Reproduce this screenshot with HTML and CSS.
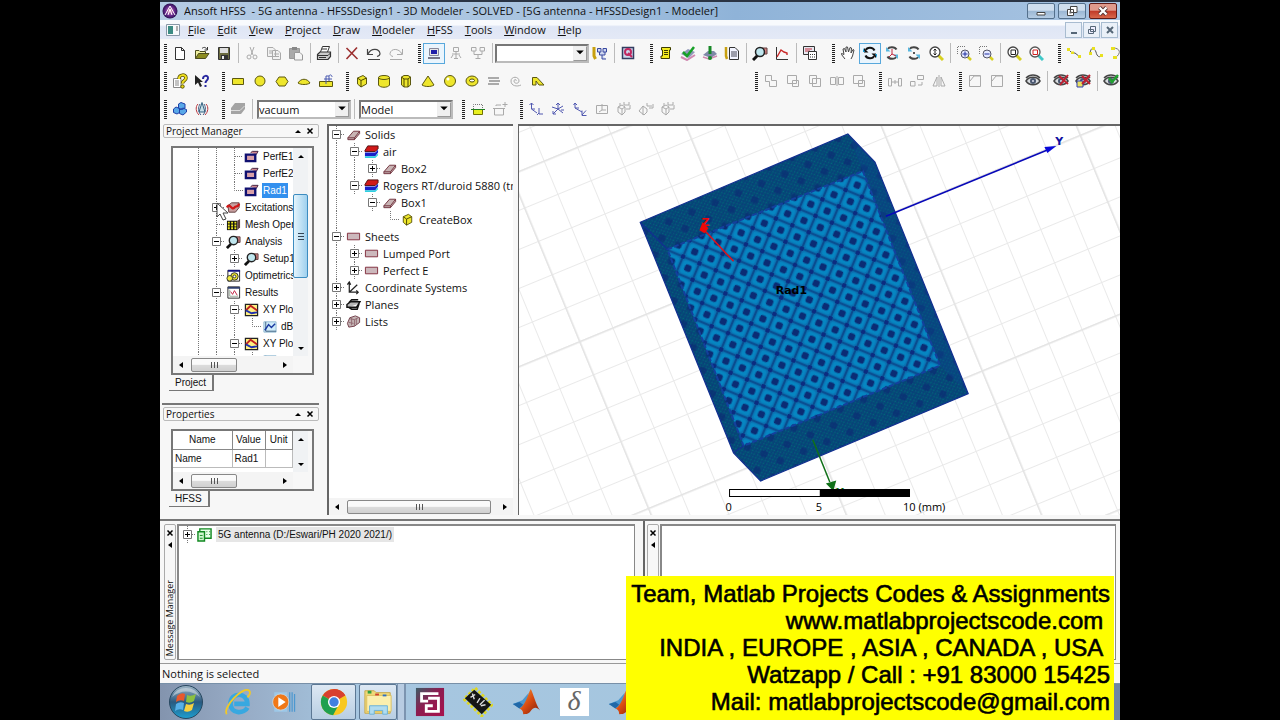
FILE: index.html
```html
<!DOCTYPE html>
<html lang="en">
<head>
<meta charset="utf-8">
<title>Ansoft HFSS - 5G antenna</title>
<link rel="stylesheet" href="styles.css">
</head>
<body>
<svg class="defs" aria-hidden="true">
  <defs>
    <linearGradient id="orbFill" x1="0" y1="0" x2="0" y2="1"><stop offset="0" stop-color="#9fb6c6"/><stop offset=".5" stop-color="#2a5a80"/><stop offset="1" stop-color="#1d9fd0"/></linearGradient>
    <linearGradient id="flame" x1="0" y1="0" x2="1" y2="1"><stop offset="0" stop-color="#f5a040"/><stop offset=".5" stop-color="#d84a10"/><stop offset="1" stop-color="#7a1c0c"/></linearGradient>
    <radialGradient id="ansFill"><stop offset="0" stop-color="#f0a0c0"/><stop offset=".6" stop-color="#6a2a90"/><stop offset="1" stop-color="#2a1050"/></radialGradient>
    <linearGradient id="plumFill" x1="0" y1="0" x2="1" y2="1"><stop offset="0" stop-color="#3c5c66"/><stop offset=".45" stop-color="#8c1c50"/><stop offset="1" stop-color="#a8104c"/></linearGradient>
    <g id="box3" stroke="#70303c"><path fill="#c8b4b4" d="M2 11.500L8 4.500H14.500V7L9 13.500H2z"/><path fill="none" d="M2 11.500H9L14.500 4.500M9 11.500V13.500"/></g>
    <g id="lens"><path d="M1 15L6 10" stroke="#111" stroke-width="3"/><circle cx="8" cy="7" r="4.500" fill="#bfe6ee" stroke="#222" stroke-width="1.500"/></g>
    <g id="eye"><path d="M1 8C4 3 12 3 15 8C12 13 4 13 1 8z" fill="#d8dce0" stroke="#444" stroke-width="1.500"/><path d="M1 5C5 1 11 1 15 5" fill="none" stroke="#444" stroke-width="1.500"/><circle cx="8" cy="8" r="3" fill="#4a5870"/><circle cx="8" cy="8" r="1" fill="#dde"/></g>
    <g id="mag"><path d="M10 10L15 15" stroke="#d8d020" stroke-width="3"/><circle cx="7" cy="7" r="5" fill="#fff" stroke="#444" stroke-width="1.300"/></g>
  </defs>

  <symbol id="g-v" viewBox="0 0 18 17"><path d="M9.500 0V17" class="dots"/></symbol>
  <symbol id="g-t" viewBox="0 0 18 17"><path d="M9.500 0V17M10 8.500H18" class="dots"/></symbol>
  <symbol id="g-l" viewBox="0 0 18 17"><path d="M9.500 0V8.500H18" class="dots"/></symbol>
  <symbol id="g-plus" viewBox="0 0 18 17"><path d="M9.500 0V17M10 8.500H18" class="dots"/><path d="M5.500 4.500h8v8h-8z" fill="#fff" stroke="#777"/><path d="M7 8.500H12M9.500 6V11" stroke="#000"/></symbol>
  <symbol id="g-minus" viewBox="0 0 18 17"><path d="M9.500 0V17M10 8.500H18" class="dots"/><path d="M5.500 4.500h8v8h-8z" fill="#fff" stroke="#777"/><path d="M7 8.500H12" stroke="#000"/></symbol>

  <symbol id="up" viewBox="0 0 8 8"><path d="M1 6H7L4 3z"/></symbol>
  <symbol id="down" viewBox="0 0 8 8"><path d="M1 2H7L4 5z"/></symbol>
  <symbol id="left" viewBox="0 0 8 8"><path d="M6 1V7L2 4z"/></symbol>
  <symbol id="right" viewBox="0 0 8 8"><path d="M2 1V7L6 4z"/></symbol>
  <symbol id="cross" viewBox="0 0 8 8"><path d="M1.500 1.500L6.500 6.500M6.500 1.500L1.500 6.500" stroke="#000" stroke-width="1.500"/></symbol>

  <symbol id="new" viewBox="0 0 16 16"><path d="M3.500 2.500H9.500L12.500 5.500V14.500H3.500zM9.500 2.500V5.500H12.500" fill="#fff" stroke="#333"/></symbol>
  <symbol id="open" viewBox="0 0 16 16"><path d="M1.500 13.500V5.500H5L6 6.500H11.500V8.500" fill="#f0f0a0" stroke="#4c4c20"/><path d="M1.500 13.500L4.500 8.500H15L11.500 13.500z" fill="#8c8c20" stroke="#4c4c20"/><path d="M8 3.500C10 1.500 12 2.500 13 4.500M13.500 2V5H10.500" fill="none" stroke="#333"/></symbol>
  <symbol id="save" viewBox="0 0 16 16"><path d="M2.500 2.500H13.500V14.500H2.500z" fill="#6c6c40" stroke="#333"/><path d="M4 3H12V8H4z" fill="#ddd"/><path d="M5 10H12V14H5z" fill="#333"/><path d="M6 11H8V14H6z" fill="#eee"/></symbol>
  <symbol id="cut" viewBox="0 0 16 16"><path d="M6 2L9 10M10 2L7 10" class="ln"/><circle cx="5" cy="12" r="2" class="ln"/><circle cx="11" cy="12" r="2" class="ln"/></symbol>
  <symbol id="copy" viewBox="0 0 16 16"><path d="M1.500 2.500H7L9.500 5V11.500H1.500zM6.500 5.500H12L14.500 8V14.500H6.500zM3 6H6M3 8H6M8 9H13M8 11.500H13" fill="#f2f2f2" stroke="#aaa"/></symbol>
  <symbol id="paste" viewBox="0 0 16 16"><path d="M1.500 3.500H11.500V13.500H1.500z" fill="#aaa" stroke="#999"/><path d="M4 2H9V5H4z" fill="#888"/><path d="M6.500 7.500H12L14.500 10V15H6.500z" fill="#f5f5f5" stroke="#999"/></symbol>
  <symbol id="print" viewBox="0 0 16 16"><path d="M4.500 7L6.500 1.500H13.500L11.500 7" fill="#fff" stroke="#333"/><path d="M1.500 9.500L4 7H14.500V11.500L12 14.500H1.500z" fill="#ccc" stroke="#333" stroke-width="1.200"/><path d="M2 10.500H12M12 10.500L14.500 8M6 4H11M3 12.500H10" stroke="#333"/></symbol>
  <symbol id="del" viewBox="0 0 16 16"><path d="M2.500 3L13.500 14M13 2.500L2.500 14" stroke="#9c3030" stroke-width="1.600"/></symbol>
  <symbol id="undo" viewBox="0 0 16 16"><path d="M1.500 4V9.500H7M2 9C5 3 13 3 14 8.500C14 10 13 11 11 11.500M2 14.500H14" fill="none" stroke="#444" stroke-width="1.200"/></symbol>
  <symbol id="redo" viewBox="0 0 16 16"><path d="M14.500 4V9.500H9M14 9C11 3 3 3 2 8.500C2 10 3 11 5 11.500M2 14.500H14" class="ln"/></symbol>
  <symbol id="pc" viewBox="0 0 16 16"><path d="M3.500 3.500H12.500V10.500H3.500z" fill="#e8e8e8" stroke="#889"/><path d="M5 5H11V9H5z" fill="#2020a8"/><path d="M2 12H14V14H2z" fill="#778"/></symbol>
  <symbol id="net1" viewBox="0 0 16 16"><path d="M5.500 2.500H10.500V6.500H5.500zM8 7V13M4 9H12M3 13L5 10M13 13L11 10M6 13.500H10" class="ln"/></symbol>
  <symbol id="net2" viewBox="0 0 16 16"><path d="M1.500 2.500H6V6H1.500zM10 2.500H14.500V6H10zM4 6V9.500H12V6M8 9.500V13M5.500 13.500H10.500" class="ln"/></symbol>
  <symbol id="queue" viewBox="0 0 16 16"><path d="M2 2V11L3.500 14" stroke="#c8a010" stroke-width="3" fill="none"/><path d="M5.500 3.500H9V7H5.500zM11 3.500H14.500V7H11zM7.500 7V10H13V7M10 10V14H14" fill="#d0d8f0" stroke="#3848a0"/></symbol>
  <symbol id="qbox" viewBox="0 0 16 16"><path d="M2.500 2.500H13.500V13.500H2.500z" fill="#cdd8ee" stroke="#333c60" stroke-width="1.500"/><circle cx="8" cy="7" r="3" fill="none" stroke="#c02860" stroke-width="2"/><path d="M8 8L12 12" stroke="#c02860" stroke-width="2"/></symbol>
  <symbol id="scroll" viewBox="0 0 16 16"><path d="M3.500 2.500H12.500V5H11.500V13.500H3V11H4.500V5H3.500z" fill="#f4ec20" stroke="#3c3c00"/><path d="M6 5.500H10M6 7.500H10M6 9.500H10" stroke="#3c3c00"/></symbol>
  <symbol id="check" viewBox="0 0 16 16"><path d="M1 9L8 4L15 7L9 13z" fill="#9098b8"/><path d="M1 12L7 15L15 10" fill="none" stroke="#d088b0" stroke-width="2"/><path d="M3 7L7 11L14 2" fill="none" stroke="#18a028" stroke-width="2.500"/></symbol>
  <symbol id="bang" viewBox="0 0 16 16"><path d="M1 10L6 6H12L15 9L9 13z" fill="#8088a8"/><path d="M1 12L7 14L15 11" fill="none" stroke="#d088b0" stroke-width="1.500"/><path d="M8 1V9" stroke="#188828" stroke-width="3"/><circle cx="8" cy="13" r="2" fill="#188828"/></symbol>
  <symbol id="notes" viewBox="0 0 16 16"><path d="M2 2V11L3 14" stroke="#c8a010" stroke-width="2.500" fill="none"/><path d="M5.500 2.500H11L14.500 6V14.500H5.500z" fill="#f2f4ff" stroke="#333"/><path d="M7 7H13M7 9H13M7 11H13" stroke="#445"/></symbol>
  <symbol id="lensbox" viewBox="0 0 16 16"><path d="M7 3H15V9H8z" fill="#d08080" stroke="#604040"/><use href="#lens"/></symbol>
  <symbol id="plot" viewBox="0 0 16 16"><path d="M2.500 2V14.500H14" fill="none" stroke="#333"/><path d="M3 12L7 5L10 7L13 8V10" fill="none" stroke="#c82828" stroke-width="1.400"/></symbol>
  <symbol id="report" viewBox="0 0 16 16"><path d="M1.500 1.500H12.500V9.500H1.500z" fill="#e8e8f0" stroke="#333"/><path d="M3 4H10M3 6H8" stroke="#c03040"/><path d="M6.500 6.500H14.500V14.500H6.500z" fill="#fff" stroke="#333"/><path d="M8 9.500H13M8 12H13" stroke="#333" stroke-dasharray="1 1"/></symbol>
  <symbol id="hand" viewBox="0 0 16 16"><path d="M5 14L1.500 9.500V8.500L4 9.500L3 4L4.500 3.500L6 7L6 2H7.500L8.500 7L10 2.500L11.500 3L11 8L13 4.500L14 5L12.500 11L11 14" fill="#fff" stroke="#444"/></symbol>
  <symbol id="rot" viewBox="0 0 16 16"><path d="M4 5C5 2 11 2 12.500 5.500M12 11C11 14 5 14 3.500 10.500" fill="none" stroke="#111" stroke-width="2"/><path d="M2 3V7.500H6.500zM14 13V8.500H9.500z" fill="#111"/><path d="M1 3V7H3zM15 13V9H13z" fill="#20a0d8"/></symbol>
  <symbol id="rotz" viewBox="0 0 16 16"><path d="M4 4C5 1.500 11 1.500 12.500 4.500M12 12C11 14.500 5 14.500 3.500 11.500" fill="none" stroke="#444" stroke-width="2"/><path d="M2 2V6.500H6.500zM14 14V9.500H9.500z" fill="#58b8e0"/><path d="M8 4V9L5 12M8 9L12 11" fill="none" stroke="#c02840"/></symbol>
  <symbol id="rots" viewBox="0 0 16 16"><path d="M4 4C5 1.500 11 1.500 12.500 4.500M12 12C11 14.500 5 14.500 3.500 11.500" fill="none" stroke="#444" stroke-width="2"/><path d="M2 2V6.500H6.500zM14 14V9.500H9.500z" fill="#58b8e0"/><circle cx="8" cy="8" r="1" fill="#222"/></symbol>
  <symbol id="zoomv" viewBox="0 0 16 16"><use href="#mag"/><path d="M7 4V10M5.500 5.500L7 4L8.500 5.500M5.500 8.500L7 10L8.500 8.500" fill="none" stroke="#222"/></symbol>
  <symbol id="zoomin" viewBox="0 0 16 16"><path d="M1.500 9V1.500H10" class="dots"/><path d="M11 11L15 15" stroke="#d8d020" stroke-width="2.500"/><circle cx="9" cy="9" r="4" fill="#e4e8ff" stroke="#556"/><path d="M6.500 9H11.500M9 6.500V11.500" stroke="#2030a0"/></symbol>
  <symbol id="zoomout" viewBox="0 0 16 16"><path d="M1.500 9V1.500H10" class="dots"/><path d="M11 11L15 15" stroke="#d8d020" stroke-width="2.500"/><circle cx="9" cy="9" r="4" fill="#e4e8ff" stroke="#556"/><path d="M6.500 9H11.500" stroke="#2030a0"/></symbol>
  <symbol id="fit" viewBox="0 0 16 16"><use href="#mag"/><path d="M5 5H9.500V9.500H5z" fill="none" stroke="#222"/></symbol>
  <symbol id="fitsel" viewBox="0 0 16 16"><path d="M10 10L15 15" stroke="#40c8c8" stroke-width="3"/><circle cx="7" cy="7" r="5" fill="#fff" stroke="#555" stroke-width="1.300"/><path d="M5 5H9.500V9.500H5z" fill="none" stroke="#d02020"/></symbol>
  <symbol id="line1" viewBox="0 0 16 16"><path d="M2 4L6 8H9L14 12" fill="none" stroke="#555"/><path d="M1 3H4V6H1zM5 6.500H8V9H5zM12 10H15V13H12z" fill="#e8e020"/></symbol>
  <symbol id="line2" viewBox="0 0 16 16"><path d="M2 8C3 2 6 2 8 7C9 12 12 13 14 10" fill="none" stroke="#555"/><path d="M1 7H4V10H1zM4 2H7V5H4zM12 9H15V12H12z" fill="#e8e020"/></symbol>
  <symbol id="line3" viewBox="0 0 16 16"><path d="M3 3C10 3 12 8 5 13" fill="none" stroke="#777"/><path d="M1 2H5V5H1zM3 11H7V14H3z" fill="#e8e020"/></symbol>

  <symbol id="helpdoc" viewBox="0 0 16 16"><path d="M1.500 5.500H9V14.500H1.500z" fill="#fff" stroke="#888"/><path d="M3 8H7M3 10H7M3 12H7" stroke="#888"/><path d="M7 6C7 1 14 1 14 5C14 8 10.500 7 10.500 10.500" fill="none" stroke="#5c5400" stroke-width="3.500"/><path d="M7 6C7 1 14 1 14 5C14 8 10.500 7 10.500 10.500" fill="none" stroke="#f0e020" stroke-width="2"/><circle cx="10.500" cy="13.500" r="1.700" fill="#e8d818" stroke="#5c5400"/></symbol>
  <symbol id="helpptr" viewBox="0 0 16 16"><path d="M1 2V12L4 9.500L6 14L8 13L6 9H9z" fill="#222"/><path d="M9 6C9 2 14 2 14 5C14 8 11.500 7 11.500 10M11.500 12V14" fill="none" stroke="#2828a0" stroke-width="2"/></symbol>
  <symbol id="rect" viewBox="0 0 16 16"><path d="M2.500 5.500H13.500V11.500H2.500z" class="yl"/></symbol>
  <symbol id="circ" viewBox="0 0 16 16"><circle cx="8" cy="8" r="5" class="yl"/></symbol>
  <symbol id="hex" viewBox="0 0 16 16"><path d="M2 8.500L5 4H11L14 8.500L11 13H5z" class="yl"/></symbol>
  <symbol id="arc" viewBox="0 0 16 16"><path d="M2 10C5 5 11 5 14 10C11 12 5 12 2 10z" class="yl"/></symbol>
  <symbol id="eqn" viewBox="0 0 16 16"><path d="M1.500 8.500H14.500V13.500H1.500z" class="yl"/><path d="M8 11V3H11M11 8V3C12 1 14 2 14 4M6 6H14" fill="none" stroke="#4858b0"/></symbol>
  <symbol id="cube" viewBox="0 0 16 16"><path d="M3.500 5L9 2.500L12.500 5V11L7 14L3.500 11z" class="yl"/><path d="M3.500 5L7 7.500L12.500 5M7 7.500V14" fill="none" stroke="#4c4800"/></symbol>
  <symbol id="cyl" viewBox="0 0 16 16"><path d="M2.500 4.500V12C4 15 12 15 13.500 12V4.500" class="yl"/><ellipse cx="8" cy="4.500" rx="5.500" ry="2" class="yl"/></symbol>
  <symbol id="prism" viewBox="0 0 16 16"><path d="M3.500 4L6 2.500H10L12.500 4V12L10 14H6L3.500 12z" class="yl"/><path d="M3.500 4L6 6H10L12.500 4M6 6V14M10 6V14" fill="none" stroke="#4c4800"/></symbol>
  <symbol id="cone" viewBox="0 0 16 16"><path d="M8 3L14 12C11 14 5 14 2 12z" class="yl"/></symbol>
  <symbol id="ball" viewBox="0 0 16 16"><circle cx="8" cy="8" r="5.500" class="yl"/><circle cx="6" cy="6" r="1.500" fill="#fff"/></symbol>
  <symbol id="torus" viewBox="0 0 16 16"><ellipse cx="8" cy="8" rx="6" ry="5" class="yl"/><ellipse cx="8" cy="7.500" rx="2.500" ry="1.500" fill="#fff" stroke="#4c4800"/></symbol>
  <symbol id="helix" viewBox="0 0 16 16"><path d="M2 5H13M3 8H14M2 11H13" stroke="#aaa" stroke-width="2"/></symbol>
  <symbol id="spiral" viewBox="0 0 16 16"><path d="M8 8C9 6 6 6 6 8C6 11 11 11 11 8C11 3 3 3 3 8C3 13 9 14 13 12" class="ln"/></symbol>
  <symbol id="sweep" viewBox="0 0 16 16"><path d="M2.500 12V4.500H7L14 12H9L6 8V12z" class="yl"/></symbol>
  <symbol id="bool1" viewBox="0 0 16 16"><path d="M2.500 2.500H8.500V7.500H13.500V13.500H6.500V8.500H2.500z" class="ln"/></symbol>
  <symbol id="bool2" viewBox="0 0 16 16"><path d="M2.500 2.500H11.500V10.500H2.500zM7.500 7.500H13.500V13.500H7.500z" class="ln"/></symbol>
  <symbol id="bool3" viewBox="0 0 16 16"><path d="M2.500 2.500H9.500V10.500H2.500zM5.500 5.500H13.500V13.500H5.500z" class="ln"/></symbol>
  <symbol id="bool4" viewBox="0 0 16 16"><path d="M1.500 4.500H6.500V11.500H1.500zM9.500 4.500H14.500V11.500H9.500zM8 3V13" class="ln"/></symbol>
  <symbol id="move" viewBox="0 0 16 16"><path d="M1.500 5.500H4.500V13H1.500zM11.500 5.500H14.500V13H11.500zM5 9H11M8 7V11" class="ln"/></symbol>
  <symbol id="turn" viewBox="0 0 16 16"><path d="M1.500 8.500H6V13H1.500zM8.500 2.500H14.500V6.500H8.500zM13 9V12H9" class="ln"/></symbol>
  <symbol id="mirror" viewBox="0 0 16 16"><path d="M6 4V13H2zM10 4V13H14zM8 2V14" class="ln"/></symbol>
  <symbol id="fillet" viewBox="0 0 16 16"><path d="M2.500 2.500H13.500V13.500H2.500zM3 8L7 3H13" class="ln"/></symbol>
  <symbol id="eye1" viewBox="0 0 16 16"><use href="#eye"/></symbol>
  <symbol id="eye2" viewBox="0 0 16 16"><use href="#eye"/><path d="M6 3L15 11M15 2L7 12" stroke="#c02030" stroke-width="2"/></symbol>
  <symbol id="eye3" viewBox="0 0 16 16"><use href="#eye"/><path d="M2 8H8V14H2z" fill="#e8e060" stroke="#3040b0"/><path d="M7 3L15 11M15 2L7 11" stroke="#c02030" stroke-width="2"/></symbol>
  <symbol id="eye4" viewBox="0 0 16 16"><use href="#eye"/><path d="M6 5L9 9L15 2" fill="none" stroke="#20a030" stroke-width="2.500"/></symbol>
  <symbol id="cubes" viewBox="0 0 16 16"><path d="M6.500 3L9 1.500L13 3V7L10 8.500L6.500 7zM1.500 8L4 6L7.500 7.500V11.500L5 13L1.500 11.500zM7.500 9L11 7L14.500 8.500V11L11 14L7.500 12.500z" fill="#58a8e8" stroke="#2040a8"/></symbol>
  <symbol id="radiate" viewBox="0 0 16 16"><path d="M8 1.500L5 11H11z" fill="#c8e0e8" stroke="#306080"/><path d="M4 3C1 6 2 11 5 14M12 3C15 6 14 11 11 14" fill="none" stroke="#b83840"/><path d="M6 3C4 6 4 11 7 14M10 3C12 6 12 11 9 14" fill="none" stroke="#405c80"/></symbol>
  <symbol id="stack" viewBox="0 0 16 16"><path d="M1 7L5 2H15V8L11 13H1z" fill="#a4a4a4"/><path d="M1 9.500H10L14.500 5" fill="none" stroke="#ddd"/></symbol>
  <symbol id="secta" viewBox="0 0 16 16"><path d="M3.500 8V3.500H12.500V8" class="dots"/><path d="M3.500 8.500H12.500V13.500H3.500z" fill="#e8f020" stroke="#707000"/><path d="M1 8.500H15" stroke="#208020"/></symbol>
  <symbol id="sectb" viewBox="0 0 16 16"><path d="M2.500 7.500H11.500V14H2.500zM1 7.500H13M4 5V4H9M13 1V6M10.500 3.500H15.500" class="ln"/></symbol>
  <symbol id="cs1" viewBox="0 0 16 16"><path d="M3.500 2V8H7M1.500 4L3.500 2L5.500 4M3.500 8L9 12M11 7V13H15M9 14L11 12" class="cs"/></symbol>
  <symbol id="cs2" viewBox="0 0 16 16"><path d="M8 2V8L13 5M8 8L13 12M8 8L3 13M2 6L8 8M6 4L8 2L10 4M11 9H14M3 10V13H6" class="cs"/></symbol>
  <symbol id="cs3" viewBox="0 0 16 16"><path d="M3 2V7H7M1.500 4L3 2L5 4M3 7L10 11M10 9.500V14.500H14.500M10 14L14 9.500" class="cs"/></symbol>
  <symbol id="cs4" viewBox="0 0 16 16"><path d="M2.500 4.500H13.500V12.500H2.500zM8 3V9H12M8 9L5 11" class="ln"/></symbol>
  <symbol id="cs5" viewBox="0 0 16 16"><path d="M2 6L6 4L9 6V11L6 14L2 11zM2 6L6 8L9 6M6 8V14M4 2V5M8 1V4H13V1M10 8H14V4" class="ln"/></symbol>
  <symbol id="cs6" viewBox="0 0 16 16"><path d="M1 10L5 5L9 8V11L6 14zM9 2V5H14M11 7H15V3M5 5V14" class="ln"/></symbol>

  <symbol id="face" viewBox="0 0 16 16"><path d="M7 4L9 2.500H15L13 6" fill="#d08890" stroke="#402040"/><path d="M2 6H12V13H2z" fill="#d8a0a8" stroke="#101070" stroke-width="2.500"/></symbol>
  <symbol id="excite" viewBox="0 0 16 16"><path d="M2 6L6 3H14V8L10 13H3z" fill="#c8a0a0" stroke="#604040"/><path d="M1 8C4 2 6 12 9 8C11 5 12 9 14 4" fill="none" stroke="#d01818" stroke-width="2.500"/></symbol>
  <symbol id="mesh" viewBox="0 0 16 16"><path d="M1 4H12V14H1z" fill="#111"/><path d="M12 4L15 2V11L12 14z" fill="#604040"/><path d="M2 6H4M5.500 6H7.500M9 6H11M2 9H4M5.500 9H7.500M9 9H11M2 12H4M5.500 12H7.500M9 12H11" stroke="#f0e820" stroke-width="2"/></symbol>
  <symbol id="optim" viewBox="0 0 16 16"><path d="M2 2.500H14.500V14H2z" fill="#fff" stroke="#222"/><path d="M2 2H15V4H2z" fill="#101080"/><circle cx="9" cy="9" r="4" fill="#e8e030" stroke="#333"/><circle cx="9" cy="9" r="1.500" fill="#fff" stroke="#333"/><circle cx="4" cy="11" r="3" fill="#f0e840" stroke="#333"/></symbol>
  <symbol id="results" viewBox="0 0 16 16"><path d="M2 2H14.500V14H2z" fill="#fff" stroke="#222"/><path d="M2 2H15V4H2z" fill="#304070"/><path d="M4 5V12H13" fill="none" stroke="#9a9"/><path d="M5 7L7 10L9 6L12 11" fill="none" stroke="#c02040"/></symbol>
  <symbol id="xy" viewBox="0 0 16 16"><path d="M1.500 2.500H14.500V14.500H1.500z" fill="#fff080" stroke="#222" stroke-width="1.300"/><path d="M2 9L7 4L14 9" fill="none" stroke="#c02020" stroke-width="2"/><path d="M2 9L8 12L14 11" fill="none" stroke="#2030b0" stroke-width="2"/></symbol>
  <symbol id="trace" viewBox="0 0 16 16"><path d="M2 3H15V14H2z" fill="#d0ecfa" stroke="#90b8d0"/><path d="M4 3V13H15" fill="none" stroke="#406080"/><path d="M3 12L7 6L10 9L14 5" fill="none" stroke="#1838a0" stroke-width="1.500"/></symbol>
  <symbol id="solid" viewBox="0 0 16 16"><use href="#box3"/></symbol>
  <symbol id="mat" viewBox="0 0 16 16"><path d="M1 7L4 2H15V5L12 8H1z" fill="#d01818" stroke="#501010"/><path d="M1 12V9H12L15 6V9L12 13H1z" fill="#1820c8"/><path d="M1 13H12L15 10V12L12 15H1z" fill="#30d0e0"/></symbol>
  <symbol id="sheet" viewBox="0 0 16 16"><path d="M1.500 4.500H14.500V11.500H1.500z" fill="#ccb8bc" stroke="#802c3c"/></symbol>
  <symbol id="axes" viewBox="0 0 16 16"><path d="M3.500 3V13H12M3.500 13L12 5M1.500 5L3.500 2L5 5M11 11L13 13L11 15" fill="none" stroke="#222" stroke-width="1.300"/></symbol>
  <symbol id="planes" viewBox="0 0 16 16"><path d="M1 8L5 5H15L11 11H1zM3 11L6 13H12L14 7M3 6L6 3H13" fill="#b8b8b8" stroke="#111" stroke-width="1.500"/></symbol>
  <symbol id="lists" viewBox="0 0 16 16"><path d="M1.500 10L4 4L10 2L14.500 4V9L9 13L3 14z" fill="#c4b4b4" stroke="#703c48"/><path d="M4 5L9 6L13 4M9 6V13M3 9L8 10M6 4V12M11 5V11" fill="none" stroke="#906870"/></symbol>
  <symbol id="proj" viewBox="0 0 16 16"><path d="M3 2H15V12H3z" fill="#e8ffe8" stroke="#108820" stroke-width="1.500"/><path d="M1 5H8V15H1z" fill="#d0f8d0" stroke="#108820" stroke-width="1.500"/><path d="M3 9H6M3 12H6M10 5H11M13 5H14M10 8H11M13 8H14" stroke="#108820"/></symbol>
  <symbol id="childwin" viewBox="0 0 16 16"><path d="M1.500 2.500H14.500V13.500H1.500z" fill="#f8fafc" stroke="#8898a8"/><path d="M3 4H8V12H3z" fill="#3c8c84"/><path d="M12 4V9" stroke="#666"/></symbol>
  <symbol id="matlab" viewBox="0 0 32 32"><path d="M2 18L12 14L19 6L16 20L9 23z" fill="#4a98d0"/><path d="M2 18L9 23L13 19L9 16z" fill="#2068a8"/><path d="M21 2C24 7 26 18 31 25C27 21 24 21 20 27C18 29 16 29 13 29C13 25 11 24 9 23C15 20 18 8 21 2z" fill="url(#flame)"/></symbol>
</svg>

<div class="stage">
  <header class="titlebar">
    <svg class="applogo" viewBox="0 0 16 16"><circle cx="8" cy="8" r="7.500" fill="url(#ansFill)"/><path d="M3 12L8 3L13 12M6 12L8 6L10 12" fill="none" stroke="#fff"/></svg>
    <h1>Ansoft HFSS&nbsp; - 5G antenna - HFSSDesign1 - 3D Modeler - SOLVED - [5G antenna - HFSSDesign1 - Modeler]</h1>
    <div class="winbtns">
      <button aria-label="Minimize"><svg viewBox="0 0 16 12"><path d="M4 7.500H12V10H4z" fill="#fff" stroke="#444"/></svg></button>
      <button aria-label="Restore"><svg viewBox="0 0 16 12"><path d="M6.500 1.500H13V7.500H6.500zM3.500 4.500H9.500V10.500H3.500z" fill="#fff" stroke="#444"/><path d="M5.500 6.500H7.500V8.500H5.500z" fill="#666"/></svg></button>
      <button class="shut" aria-label="Close"><svg viewBox="0 0 16 12"><path d="M4.500 2.500L11.500 9.500M11.500 2.500L4.500 9.500" stroke="#533" stroke-width="4"/><path d="M4.500 2.500L11.500 9.500M11.500 2.500L4.500 9.500" stroke="#fff" stroke-width="2.300"/></svg></button>
    </div>
  </header>

  <nav class="menubar">
    <svg class="ic childic"><use href="#childwin"/></svg>
    <button><u>F</u>ile</button><button><u>E</u>dit</button><button><u>V</u>iew</button><button><u>P</u>roject</button><button><u>D</u>raw</button><button><u>M</u>odeler</button><button><u>H</u>FSS</button><button><u>T</u>ools</button><button><u>W</u>indow</button><button><u>H</u>elp</button>
    <div class="childbtns">
      <button aria-label="Minimize child"><svg viewBox="0 0 16 14"><path d="M5 10H11" stroke="#567" stroke-width="2"/></svg></button>
      <button aria-label="Restore child"><svg viewBox="0 0 16 14"><path d="M6.500 3.500H11.500V8.500H6.500zM4.500 6.500H9.500V10.500H4.500z" fill="#eef" stroke="#567"/></svg></button>
      <button aria-label="Close child"><svg viewBox="0 0 16 14"><path d="M5 4L11 10M11 4L5 10" stroke="#567" stroke-width="2"/></svg></button>
    </div>
  </nav>

  <div class="toolbars">
    <div class="toolbar wide">
      <i class="grip"></i>
      <button><svg class="ic"><use href="#new"/></svg></button><button><svg class="ic"><use href="#open"/></svg></button><button><svg class="ic"><use href="#save"/></svg></button><i class="sep"></i>
      <button><svg class="ic"><use href="#cut"/></svg></button><button><svg class="ic"><use href="#copy"/></svg></button><button><svg class="ic"><use href="#paste"/></svg></button><i class="sep"></i>
      <button><svg class="ic"><use href="#print"/></svg></button><i class="sep"></i>
      <button><svg class="ic"><use href="#del"/></svg></button><button><svg class="ic"><use href="#undo"/></svg></button><button><svg class="ic"><use href="#redo"/></svg></button>
      <i class="grip"></i>
      <button class="on"><svg class="ic"><use href="#pc"/></svg></button><button><svg class="ic"><use href="#net1"/></svg></button><button><svg class="ic"><use href="#net2"/></svg></button><i class="sep"></i>
      <label class="combo"><select aria-label="Machine"><option></option></select><span class="drop"><svg><use href="#down"/></svg></span></label>
      <button><svg class="ic"><use href="#queue"/></svg></button><i class="sep"></i>
      <button><svg class="ic"><use href="#qbox"/></svg></button>
      <i class="grip"></i>
      <button><svg class="ic"><use href="#scroll"/></svg></button><button><svg class="ic"><use href="#check"/></svg></button><button><svg class="ic"><use href="#bang"/></svg></button><button><svg class="ic"><use href="#notes"/></svg></button><i class="sep"></i>
      <button><svg class="ic"><use href="#lensbox"/></svg></button><button><svg class="ic"><use href="#plot"/></svg></button><i class="sep"></i>
      <button><svg class="ic"><use href="#report"/></svg></button>
      <i class="grip"></i>
      <button><svg class="ic"><use href="#hand"/></svg></button><button class="on"><svg class="ic"><use href="#rot"/></svg></button><button><svg class="ic"><use href="#rotz"/></svg></button><button><svg class="ic"><use href="#rots"/></svg></button><button><svg class="ic"><use href="#zoomv"/></svg></button><i class="sep"></i>
      <button><svg class="ic"><use href="#zoomin"/></svg></button><button><svg class="ic"><use href="#zoomout"/></svg></button><i class="sep"></i>
      <button><svg class="ic"><use href="#fit"/></svg></button><button><svg class="ic"><use href="#fitsel"/></svg></button>
      <i class="grip"></i>
      <button><svg class="ic"><use href="#line1"/></svg></button><button><svg class="ic"><use href="#line2"/></svg></button><button><svg class="ic"><use href="#line3"/></svg></button>
    </div>
    <div class="toolbar">
      <i class="grip"></i>
      <button><svg class="ic"><use href="#helpdoc"/></svg></button><button><svg class="ic"><use href="#helpptr"/></svg></button>
      <i class="grip"></i>
      <button><svg class="ic"><use href="#rect"/></svg></button><button><svg class="ic"><use href="#circ"/></svg></button><button><svg class="ic"><use href="#hex"/></svg></button><button><svg class="ic"><use href="#arc"/></svg></button><button><svg class="ic"><use href="#eqn"/></svg></button>
      <i class="grip"></i>
      <button><svg class="ic"><use href="#cube"/></svg></button><button><svg class="ic"><use href="#cyl"/></svg></button><button><svg class="ic"><use href="#prism"/></svg></button><button><svg class="ic"><use href="#cone"/></svg></button><button><svg class="ic"><use href="#ball"/></svg></button><button><svg class="ic"><use href="#torus"/></svg></button><button><svg class="ic"><use href="#helix"/></svg></button><button><svg class="ic"><use href="#spiral"/></svg></button><button><svg class="ic"><use href="#sweep"/></svg></button>
      <i class="grip far"></i>
      <button><svg class="ic"><use href="#bool1"/></svg></button><button><svg class="ic"><use href="#bool2"/></svg></button><button><svg class="ic"><use href="#bool3"/></svg></button><button><svg class="ic"><use href="#bool4"/></svg></button><button><svg class="ic"><use href="#bool2"/></svg></button>
      <i class="grip"></i>
      <button><svg class="ic"><use href="#move"/></svg></button><button><svg class="ic"><use href="#turn"/></svg></button><button><svg class="ic"><use href="#mirror"/></svg></button>
      <i class="grip"></i>
      <button><svg class="ic"><use href="#fillet"/></svg></button><button><svg class="ic"><use href="#fillet"/></svg></button>
      <i class="grip"></i>
      <button><svg class="ic"><use href="#eye1"/></svg></button><i class="sep"></i>
      <button><svg class="ic"><use href="#eye2"/></svg></button><button><svg class="ic"><use href="#eye3"/></svg></button><i class="sep"></i>
      <button><svg class="ic"><use href="#eye4"/></svg></button>
    </div>
    <div class="toolbar lower">
      <i class="grip"></i>
      <button><svg class="ic"><use href="#cubes"/></svg></button><button><svg class="ic"><use href="#radiate"/></svg></button>
      <i class="grip"></i>
      <button><svg class="ic"><use href="#stack"/></svg></button><i class="sep"></i>
      <label class="combo"><select aria-label="Material"><option>vacuum</option></select><span class="drop"><svg><use href="#down"/></svg></span></label><i class="sep"></i>
      <label class="combo"><select aria-label="Object type"><option>Model</option></select><span class="drop"><svg><use href="#down"/></svg></span></label>
      <i class="grip"></i>
      <button><svg class="ic"><use href="#secta"/></svg></button><button><svg class="ic"><use href="#sectb"/></svg></button>
      <i class="grip"></i>
      <button><svg class="ic"><use href="#cs1"/></svg></button><button><svg class="ic"><use href="#cs2"/></svg></button><button><svg class="ic"><use href="#cs3"/></svg></button><button><svg class="ic"><use href="#cs4"/></svg></button><button><svg class="ic"><use href="#cs5"/></svg></button><button><svg class="ic"><use href="#cs6"/></svg></button><button><svg class="ic"><use href="#cs5"/></svg></button>
    </div>
  </div>

  <main class="work">
    <aside class="dock">
      <section class="pane manager">
        <h2 class="panehead"><span>Project Manager</span><svg><use href="#up"/></svg><svg><use href="#cross"/></svg></h2>
        <div class="frame">
          <ul class="tree gdi">
            <li><svg><use href="#g-v"/></svg><svg><use href="#g-v"/></svg><svg><use href="#g-t"/></svg><svg class="ic"><use href="#face"/></svg>PerfE1</li>
            <li><svg><use href="#g-v"/></svg><svg><use href="#g-v"/></svg><svg><use href="#g-t"/></svg><svg class="ic"><use href="#face"/></svg>PerfE2</li>
            <li><svg><use href="#g-v"/></svg><svg><use href="#g-v"/></svg><svg><use href="#g-l"/></svg><svg class="ic"><use href="#face"/></svg><span class="sel">Rad1</span></li>
            <li><svg><use href="#g-v"/></svg><svg><use href="#g-plus"/></svg><svg class="ic"><use href="#excite"/></svg>Excitations</li>
            <li><svg><use href="#g-v"/></svg><svg><use href="#g-t"/></svg><svg class="ic"><use href="#mesh"/></svg>Mesh Oper</li>
            <li><svg><use href="#g-v"/></svg><svg><use href="#g-minus"/></svg><svg class="ic"><use href="#lensbox"/></svg>Analysis</li>
            <li><svg><use href="#g-v"/></svg><svg><use href="#g-v"/></svg><svg><use href="#g-plus"/></svg><svg class="ic"><use href="#lensbox"/></svg>Setup1</li>
            <li><svg><use href="#g-v"/></svg><svg><use href="#g-t"/></svg><svg class="ic"><use href="#optim"/></svg>Optimetrics</li>
            <li><svg><use href="#g-v"/></svg><svg><use href="#g-minus"/></svg><svg class="ic"><use href="#results"/></svg>Results</li>
            <li><svg><use href="#g-v"/></svg><svg><use href="#g-v"/></svg><svg><use href="#g-minus"/></svg><svg class="ic"><use href="#xy"/></svg>XY Plot</li>
            <li><svg><use href="#g-v"/></svg><svg><use href="#g-v"/></svg><svg><use href="#g-v"/></svg><svg><use href="#g-l"/></svg><svg class="ic"><use href="#trace"/></svg>dB</li>
            <li><svg><use href="#g-v"/></svg><svg><use href="#g-v"/></svg><svg><use href="#g-minus"/></svg><svg class="ic"><use href="#xy"/></svg>XY Plot</li>
            <li><svg><use href="#g-v"/></svg><svg><use href="#g-v"/></svg><svg><use href="#g-v"/></svg><svg><use href="#g-l"/></svg><svg class="ic"><use href="#trace"/></svg>dB</li>
          </ul>
          <div class="vbar"><button aria-label="Scroll up"><svg><use href="#up"/></svg></button><i class="vthumb"></i><button class="end" aria-label="Scroll down"><svg><use href="#down"/></svg></button></div>
          <div class="hbar"><svg><use href="#left"/></svg><i class="hthumb"></i><svg class="end"><use href="#right"/></svg></div>
        </div>
        <button class="tab gdi">Project</button>
        <svg class="cursor" viewBox="0 0 14 20"><path d="M1 1V15L4 12L7 18L10 17L7 11H12z" fill="#fff" stroke="#444"/></svg>
      </section>
      <section class="pane props">
        <h2 class="panehead"><span>Properties</span><svg><use href="#up"/></svg><svg><use href="#cross"/></svg></h2>
        <div class="frame">
          <div class="tablewrap">
            <table class="gdi"><thead><tr><th>Name</th><th>Value</th><th>Unit</th></tr></thead><tbody><tr><td>Name</td><td>Rad1</td><td></td></tr></tbody></table>
          </div>
          <div class="vbar plain"><button aria-label="Scroll up"><svg><use href="#up"/></svg></button><button class="end" aria-label="Scroll down"><svg><use href="#down"/></svg></button></div>
          <div class="hbar"><svg><use href="#left"/></svg><i class="hthumb"></i><svg class="end"><use href="#right"/></svg></div>
        </div>
        <button class="tab gdi">HFSS</button>
      </section>
    </aside>

    <section class="model">
      <ul class="tree">
        <li><svg><use href="#g-minus"/></svg><svg class="ic"><use href="#solid"/></svg>Solids</li>
        <li><svg><use href="#g-v"/></svg><svg><use href="#g-minus"/></svg><svg class="ic"><use href="#mat"/></svg>air</li>
        <li><svg><use href="#g-v"/></svg><svg><use href="#g-v"/></svg><svg><use href="#g-plus"/></svg><svg class="ic"><use href="#solid"/></svg>Box2</li>
        <li><svg><use href="#g-v"/></svg><svg><use href="#g-minus"/></svg><svg class="ic"><use href="#mat"/></svg>Rogers RT/duroid 5880 (tm)</li>
        <li><svg><use href="#g-v"/></svg><svg></svg><svg><use href="#g-minus"/></svg><svg class="ic"><use href="#solid"/></svg>Box1</li>
        <li><svg><use href="#g-v"/></svg><svg></svg><svg></svg><svg><use href="#g-l"/></svg><svg class="ic"><use href="#cube"/></svg>CreateBox</li>
        <li><svg><use href="#g-minus"/></svg><svg class="ic"><use href="#sheet"/></svg>Sheets</li>
        <li><svg><use href="#g-v"/></svg><svg><use href="#g-plus"/></svg><svg class="ic"><use href="#sheet"/></svg>Lumped Port</li>
        <li><svg><use href="#g-v"/></svg><svg><use href="#g-plus"/></svg><svg class="ic"><use href="#sheet"/></svg>Perfect E</li>
        <li><svg><use href="#g-plus"/></svg><svg class="ic"><use href="#axes"/></svg>Coordinate Systems</li>
        <li><svg><use href="#g-plus"/></svg><svg class="ic"><use href="#planes"/></svg>Planes</li>
        <li><svg><use href="#g-plus"/></svg><svg class="ic"><use href="#lists"/></svg>Lists</li>
      </ul>
      <div class="hbar"><svg><use href="#left"/></svg><i class="hthumb"></i><svg class="end"><use href="#right"/></svg></div>
    </section>

    <section class="view">
      <svg viewBox="519 127 601 388" preserveAspectRatio="xMinYMin slice" role="img" aria-label="3D model view">
        <defs>
          <pattern id="minor" width="36" height="36" patternUnits="userSpaceOnUse" patternTransform="translate(1078 136) rotate(-22.4)"><path d="M0 0H36M0 0V36" stroke="#e9e9e9" stroke-width="2" fill="none"/></pattern>
          <pattern id="major" width="180" height="180" patternUnits="userSpaceOnUse" patternTransform="translate(1078 136) rotate(-22.4)"><path d="M0 0H180M0 0V180" stroke="#e4e4e4" stroke-width="3" fill="none"/></pattern>
          <pattern id="cell" width="17.700" height="17.700" patternUnits="userSpaceOnUse" patternTransform="translate(810 205) rotate(22.700) translate(-8.850 -8.850)">
            <path d="M0 0H17.700V17.700H0z" fill="#0a70b0"/>
            <path d="M0 0H17.700M0 0V17.700M0 17.700H17.700M17.700 0V17.700" stroke="#0a4488" stroke-width="1.600"/>
            <path d="M0 0H2V2H0zM15.700 0H17.700V2H15.700zM0 15.700H2V17.700H0zM15.700 15.700H17.700V17.700H15.700z" fill="#0c2c80"/>
            <rect x="2.300" y="2.300" width="13.100" height="13.100" rx="2.500" fill="#0686c2"/>
            <rect x="5.500" y="5.500" width="6.800" height="6.800" rx="2" fill="#0b2c74"/>
          </pattern>
          <pattern id="spots" width="17.700" height="17.700" patternUnits="userSpaceOnUse" patternTransform="translate(810 205) rotate(22.700) translate(-8.850 -8.850)"><rect x="5.300" y="5.300" width="7" height="7" rx="2" fill="#0b2c74" opacity=".7"/><path d="M0 0H17.700M0 0V17.700" stroke="#0b3474" opacity=".4"/></pattern>
          <pattern id="grain" width="5" height="4" patternUnits="userSpaceOnUse" patternTransform="rotate(-22)"><path d="M0 0H5V4H0z" fill="#044c76"/><path d="M0 0H1V1H0zM2 1H4V2H2zM1 3H2V4H1z" fill="#0b387c"/><path d="M1 1H2V2H1zM3 3H4V4H3z" fill="#046880"/></pattern>
        </defs>
        <path d="M519 127H2400V1400H519z" fill="#fff"/>
        <path d="M519 127H2400V1400H519z" fill="url(#minor)"/>
        <path d="M519 127H2400V1400H519z" fill="url(#major)"/>
        <g id="airbox">
          <path d="M640 223L847 135L874 163L967 394L760 481L733 453z" fill="url(#grain)"/>
          <path d="M640 223L847 135L874 163L967 394L760 481L733 453z" fill="url(#spots)"/>
          <path d="M847 135L874 163L967 394L939 366L862 172z" fill="#0c4890" opacity=".35"/>
          <path d="M667 250L862 172L939 366L743 446z" fill="url(#cell)"/>
          <path d="M667 250L862 172L939 366L743 446z" fill="none" stroke="#14409c" stroke-width="2" stroke-dasharray="5 2"/>
          <path d="M640 223L847 135L874 163L967 394L760 481L733 453zM640 223L667 250M743 446L733 453" fill="none" stroke="#123090" stroke-width="1.300"/>
        </g>
        <path d="M885 217L1046 151" stroke="#0808b8" stroke-width="1.500"/><path d="M1055 147L1043 148L1046 154z" fill="#0808d8"/>
        <path d="M733 262L704 231" stroke="#e01018" stroke-width="1.500"/><path d="M702 223L699 231L704 234L708 229z" fill="#f00808"/>
        <path d="M812 440L829 482" stroke="#107018" stroke-width="1.500"/><path d="M832 489L827 484L834 482z" fill="#107018" stroke="#107018" stroke-width="2"/>
        <text x="1054" y="146" class="axis" fill="#1010a0">Y</text>
        <text x="701" y="227" class="axis" fill="#f00808">Z</text>
        <text x="835" y="496" class="axis" fill="#107018">X</text>
        <text x="775" y="295" class="axis" fill="#000">Rad1</text>
        <path d="M729 489.500H908V496.500H729z" fill="#fff" stroke="#000"/><path d="M819 489H909V497H819z"/>
        <g class="scale"><text x="725" y="511">0</text><text x="815" y="511">5</text><text x="902" y="511">10 (mm)</text></g>
      </svg>
    </section>
  </main>

  <section class="logs">
    <div class="log first">
      <div class="side"><svg><use href="#cross"/></svg><svg><use href="#left"/></svg><span>Message Manager</span></div>
      <div class="logbody"><ul class="tree gdi"><li><svg><use href="#g-plus"/></svg><svg class="ic"><use href="#proj"/></svg><span class="proj">5G antenna (D:/Eswari/PH 2020 2021/)</span></li></ul></div>
    </div>
    <div class="log second">
      <div class="side"><svg><use href="#cross"/></svg><svg><use href="#left"/></svg></div>
      <div class="logbody"></div>
    </div>
  </section>

  <footer class="status">Nothing is selected</footer>

  <nav class="taskbar">
    <button class="slot start" aria-label="Start"><svg viewBox="0 0 36 36"><circle cx="18" cy="18" r="16.500" fill="url(#orbFill)" stroke="#284860"/><path d="M9 12Q13 8 17 10L16 17Q12 15 8 18z" fill="#e8582c"/><path d="M19 11Q23 13 28 10L26 17Q22 20 18 18z" fill="#8cc040"/><path d="M8 20Q12 17 16 19L15 26Q11 24 7 27z" fill="#58b0e8"/><path d="M18 20Q22 22 26 19L24 26Q20 29 16 27z" fill="#f8d040"/><path d="M4 13Q18 2 32 13Q28 4 18 4Q8 4 4 13z" fill="#fff" opacity=".4"/></svg></button>
    <button class="slot" aria-label="Internet Explorer"><svg viewBox="0 0 32 32"><path d="M26 22C23 28 9 30 8 18C8 5 26 5 26 18H12" fill="none" stroke="#38a8e0" stroke-width="5"/><path d="M4 29C-1 22 22 -2 28 4C30 6 28 9 26 11" fill="none" stroke="#f0c828" stroke-width="2"/></svg></button>
    <button class="slot media" aria-label="Media Player"><svg viewBox="0 0 32 32"><path d="M4 4H20V28H4z" fill="#9cc8e8"/><path d="M23 4V28M26 4V28M29 6V28" stroke="#4c98d0" stroke-width="1.500"/><circle cx="12" cy="16" r="10" fill="#f07818" stroke="#c8dcec"/><path d="M9 10V22L18 16z" fill="#fff"/></svg></button>
    <button class="slot open" aria-label="Chrome"><svg viewBox="0 0 32 32"><circle cx="16" cy="16" r="14" fill="#f8c820"/><path d="M16 16L4 9A14 14 0 0 1 28 9z" fill="#d84030"/><path d="M16 2A14 14 0 0 1 28 9H16z" fill="#d84030"/><path d="M16 16L3.900 9A14 14 0 0 0 15 30L21 19z" fill="#20a050"/><circle cx="16" cy="16" r="6.500" fill="#fff"/><circle cx="16" cy="16" r="5" fill="#4080e0"/></svg></button>
    <button class="slot open files" aria-label="Explorer"><svg viewBox="0 0 32 32"><path d="M2 4H12L14 6H29V28H2z" fill="#f0d878" stroke="#c8a848"/><path d="M4 9H30V26H4z" fill="#fbefae" stroke="#dcc060"/><path d="M5 4H9V7H5z" fill="#30a040"/><path d="M13 7H17V9H13z" fill="#d04030"/><path d="M21 8H25V10H21z" fill="#3070c0"/><path d="M7 29V20H26V29H21V25H12V29z" fill="#b0dcf0" stroke="#68b0d8"/></svg></button><i class="stackedge"></i>
    <button class="slot app" aria-label="Screen recorder"><svg viewBox="0 0 32 32"><path d="M1 1H31V31H1z" fill="url(#plumFill)"/><path d="M25 7H7V15H14M14 12H25V26H12V20H19" fill="none" stroke="#fff" stroke-width="3"/></svg></button>
    <button class="slot app" aria-label="Chip programmer"><svg viewBox="0 0 32 32"><path d="M13 1L31 19L20 31L1 13z" fill="none" stroke="#e0d820" stroke-width="3" stroke-dasharray="3 2"/><path d="M12 3L30 19L20 29L2 12z" fill="#151515"/><path d="M8 11L13 8M10 7L12 13M15 17L18 12M18 19L23 14M19 20L24 19" stroke="#ddd" stroke-width="1.500"/></svg></button>
    <button class="slot app" aria-label="MATLAB"><svg><use href="#matlab"/></svg></button>
    <button class="slot app" aria-label="Delta"><span class="delta">δ</span></button>
    <button class="slot app" aria-label="MATLAB window"><svg><use href="#matlab"/></svg></button>
  </nav>

  <aside class="banner">
    <p>Team, Matlab Projects Codes &amp; Assignments</p>
    <p>www.matlabprojectscode.com&nbsp;</p>
    <p>INDIA , EUROPE , ASIA , CANADA , USA&nbsp;</p>
    <p>Watzapp / Call : +91 83000 15425</p>
    <p>Mail: matlabprojectscode@gmail.com</p>
  </aside>
</div>
</body>
</html>
```
FILE: styles.css
```css
* { box-sizing: border-box; }
body { margin: 0; background: #000; font-family: "Open Sans", "Noto Sans", sans-serif; font-size: 11px; color: #111; }
h1, h2, p, ul { margin: 0; padding: 0; font-weight: normal; font-size: inherit; }
ul { list-style: none; }
button { margin: 0; padding: 0; border: 0; background: none; font: inherit; color: inherit; display: flex; align-items: center; justify-content: center; flex: none; }
svg { display: block; flex: none; }
.defs { position: absolute; width: 0; height: 0; }
.ic { width: 16px; height: 16px; }
.ln { fill: none; stroke: #aaa; }
.yl { fill: #eee62c; stroke: #5c5810; }
.cs { fill: none; stroke: #5058b0; stroke-width: 1; }
.dots { fill: none; stroke: #777; stroke-dasharray: 1 1; }
.gdi { font-family: "Liberation Sans", Arial, sans-serif; font-size: 10px; }

.stage { position: relative; width: 75%; min-height: 100vh; margin: 0 auto; display: flex; flex-direction: column; background: #f7f7f7; overflow: hidden; }

.titlebar { height: 20px; flex: none; display: flex; align-items: center; padding: 0 3px 0 2px; border-top: 2px solid #2a3444; background: linear-gradient(90deg, #b4cbe4 0%, #a9c4e0 40%, #8fb3d8 60%, #a8c4e2 100%); }
.applogo { width: 16px; height: 16px; margin-right: 6px; }
.titlebar h1 { flex: 1; white-space: nowrap; overflow: hidden; line-height: 16px; }
.winbtns { display: flex; gap: 3px; }
.winbtns button { width: 28px; height: 16px; border: 1px solid #54708c; border-radius: 2px; background: linear-gradient(#cfdeee 45%, #9bb7d4 50%, #b5cce4); }
.winbtns .shut { background: linear-gradient(#e09a8c 45%, #c03a28 50%, #d8684c); border-color: #601c18; }
.winbtns svg { width: 16px; height: 12px; }

.menubar { height: 19px; flex: none; display: flex; align-items: center; gap: 12px; padding: 0 2px 0 5px; background: linear-gradient(#f8fafd 25%, #dfe6f5 35%, #e4e9f6); }
.childic { margin-right: -5px; }
.childbtns { display: flex; margin-left: auto; gap: 1px; }
.childbtns button { width: 17px; height: 16px; border: 1px solid #a8bcd0; background: #eaf0f8; }
.childbtns svg { width: 16px; height: 14px; }

.toolbars { flex: none; height: 85px; }
.toolbar { height: 28px; display: flex; align-items: center; overflow: hidden; }
.toolbar button { width: 22px; height: 21px; }
.toolbar .on { border: 1px solid #58a8dc; background: #eaf5fd; }
.grip { flex: none; width: 9px; height: 19px; margin-left: 5px; background: repeating-linear-gradient(#222 0 1px, transparent 1px 2px) 4px 0 / 3px 100% no-repeat; }
.wide .grip { margin-left: 7px; }
.toolbar .grip:first-child { margin-left: 0; }
.toolbar .far { margin-left: 202px; }
.sep { flex: none; width: 6px; height: 20px; background: linear-gradient(#bbb, #bbb) 3px 0 / 1px 100% no-repeat; }
.combo { flex: none; width: 94px; height: 19px; display: flex; border: 2px solid #777; border-right-color: #bbb; border-bottom-color: #bbb; background: #fff; }
.combo select { flex: 1; min-width: 0; appearance: none; border: 0; padding: 0; background: #fff; font: inherit; line-height: 15px; color: #111; }
.lower .combo { margin-left: 2px; }
.drop { width: 14px; display: flex; align-items: center; justify-content: center; background: #f0f0f0; border: 1px solid #999; border-top-color: #eee; border-left-color: #eee; }
.drop svg { width: 10px; height: 10px; }

.work { flex: 1; display: grid; grid-template-columns: 167px 191px 1fr; min-height: 0; padding-bottom: 4px; }
.dock { display: flex; flex-direction: column; padding: 0 8px 8px 2px; }
.pane { position: relative; display: flex; flex-direction: column; }
.manager { flex: 1; }
.panehead { display: flex; align-items: center; height: 14px; margin: 0 0 0 1px; padding: 0 4px 0 2px; border: 1px solid #bbb; border-radius: 2px; font-size: 10px; line-height: 12px; }
.panehead span { flex: 1; }
.panehead svg { width: 8px; height: 8px; margin-left: 4px; }
.frame { flex: 1; display: grid; grid-template: minmax(0, 1fr) 17px / 1fr 15px; margin: 8px 5px 0 9px; padding-right: 4px; border: 2px solid #777; background: #f7f7f7; overflow: hidden; }
.manager .frame { flex: 1 1 0; min-height: 0; }
.tree { overflow: hidden; white-space: nowrap; }
.tree li { display: flex; align-items: center; height: 17px; line-height: 17px; }
.tree li > svg { width: 18px; height: 17px; }
.tree li > .ic { width: 15px; height: 15px; margin: 0 4px 0 1px; }
.manager .tree { padding-left: 16px; background: #fff; }
.sel { background: #3390ee; color: #fff; line-height: 15px; padding: 0 1px; margin-left: -1px; }
.vbar { display: flex; flex-direction: column; background: #f0f2f4; }
.vbar button { height: 15px; }
.vbar svg, .hbar svg { width: 8px; height: 8px; }
.vbar .end { margin-top: auto; }
.vthumb { height: 84px; margin-top: 31px; border: 1px solid #3c8cc0; border-radius: 2px; background: repeating-linear-gradient(#345 0 1px, transparent 1px 3px) center / 6px 7px no-repeat, linear-gradient(90deg, #e4f4fc, #9fd0ee); }
.hbar { display: flex; align-items: center; height: 17px; padding: 0 4px; gap: 6px; background: #f4f4f4; }
.hthumb { width: 46px; height: 14px; border: 1px solid #888; border-radius: 2px; background: repeating-linear-gradient(90deg, #555 0 1px, transparent 1px 3px) center / 7px 6px no-repeat, linear-gradient(#fafafa 45%, #dcdcdc 50%, #d0d0d0); }
.hbar .end { margin-left: auto; }
.tab { align-self: flex-start; height: 16px; margin-left: 7px; padding: 0 6px; border: solid #777; border-width: 0 2px 1px 0; background: #f7f7f7; font-family: "Liberation Sans", Arial, sans-serif; font-size: 10px; }
.cursor { position: absolute; left: 54px; top: 78px; width: 14px; height: 20px; }
.props { margin-top: 12px; padding-top: 2px; border-top: 2px solid #777; }
.props .frame { flex: none; height: 62px; }
.tablewrap { overflow: hidden; background: #fff; }
table { width: 120px; border-collapse: collapse; table-layout: fixed; }
th, td { height: 18px; padding: 0 2px; border: solid #888; border-width: 0 1px 1px 0; font-weight: normal; text-align: left; white-space: nowrap; }
th { text-align: center; }
th:first-child { width: 59px; }
th:nth-child(2) { width: 33px; }
td { border-color: #bbb; }

.model { display: flex; flex-direction: column; margin-right: 5px; border-left: 2px solid #666; border-top: 2px solid #666; background: #fff; min-width: 0; }
.model .tree { flex: 1; margin-left: -2px; }
.model .hthumb { width: 144px; }
.view { border-left: 1px solid #666; border-top: 2px solid #666; background: #fff; overflow: hidden; min-width: 0; min-height: 0; }
.view svg { width: 100%; height: 100%; }
.axis { font: bold 11px "DejaVu Sans", sans-serif; }
.scale { font-size: 11px; }

.logs { flex: none; display: flex; height: 144px; border-top: 2px solid #777; }
.log { display: flex; min-width: 0; padding: 3px 0 3px 4px; }
.first { width: 485px; padding-right: 8px; border-right: 2px solid #666; }
.second { flex: 1; padding-right: 4px; padding-left: 2px; }
.side { flex: none; width: 12px; display: flex; flex-direction: column; align-items: center; gap: 4px; padding-top: 4px; margin-right: 1px; border: 1px solid #aaa; border-radius: 2px; }
.side svg { width: 8px; height: 8px; }
.side span { margin-top: auto; margin-bottom: 3px; writing-mode: vertical-rl; transform: rotate(180deg); font-size: 9px; line-height: 10px; }
.logbody { flex: 1; min-width: 0; border: 1px solid #888; border-width: 2px 1px 1px 2px; background: #fff; }
.logbody .tree { margin-left: -1px; }
.proj { background: #e6e6e6; line-height: 15px; padding: 0 2px; }

.status { flex: none; height: 20px; padding-left: 2px; border-top: 1px solid #999; line-height: 20px; background: #f8f8f8; }
.taskbar { flex: none; height: 37px; display: flex; align-items: center; border-top: 1px solid #7890a8; background: linear-gradient(90deg, #8394ae 0, #96aac4 8%, #a6c6e0 20%, #a5c6de 80%, #6c84a0 100%); }
.slot { width: 52px; height: 36px; }
.slot svg { width: 30px; height: 30px; }
.start svg { width: 36px; height: 36px; }
.media { width: 40px; }
.media svg { width: 26px; height: 26px; }
.open { width: 45px; margin-left: 5px; border: 1px solid #5c7894; border-radius: 2px; background: linear-gradient(#dde8f3, #b8cee2); }
.media + .open { margin-left: 7px; }
.files { width: 38px; margin-left: 3px; }
.stackedge { width: 9px; height: 36px; border: solid #7c94b0; border-width: 0 2px 0 1px; background: #b8cce2; }
.app { width: 48px; }
.delta { width: 29px; height: 28px; background: #fff; color: #666; font: italic 28px/26px "Liberation Serif", serif; }

.banner { position: absolute; right: 6px; bottom: 0; padding: 4px 4px 5px 5px; background: #ff0; color: #000; text-align: right; font: 24px/27px "Liberation Sans", Arial, sans-serif; -webkit-text-stroke: 0.6px #000; white-space: nowrap; }
```
